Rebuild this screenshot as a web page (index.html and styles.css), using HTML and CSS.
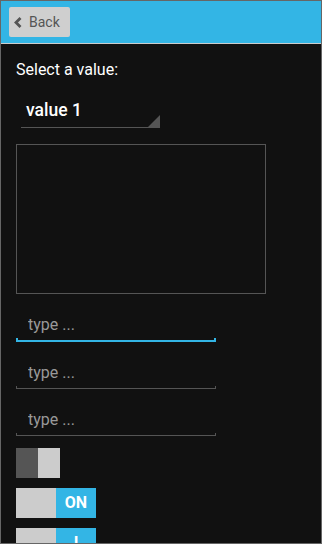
FILE: index.html
```html
<!DOCTYPE html>
<html lang="en">
<head>
  <meta charset="UTF-8">
  <meta name="viewport" content="width=device-width, initial-scale=1">
  <title>Form controls</title>
  <link rel="stylesheet" href="styles.css">
</head>
<body>
  <header class="toolbar">
    <button class="back-btn" type="button">
      <svg class="back-icon" width="8" height="11" viewBox="0 0 8 11"><polyline points="6.5,1 2,5.5 6.5,10" fill="none" stroke="#555" stroke-width="2.8"/></svg>
      Back
    </button>
  </header>
  <div class="content">
    <div class="label">Select a value:</div>
    <div class="picker">
      <span>value 1</span>
      <span class="picker-corner"></span>
    </div>
    <textarea class="area"></textarea>
    <div class="field">
      <input class="field-input" type="text" placeholder="type ...">
      <div class="field-line focused"></div>
    </div>
    <div class="field">
      <input class="field-input" type="text" placeholder="type ...">
      <div class="field-line"></div>
    </div>
    <div class="field">
      <input class="field-input" type="text" placeholder="type ...">
      <div class="field-line"></div>
    </div>
    <div class="toggle small">
      <span class="knob-off"></span>
      <span class="knob-light"></span>
    </div>
    <div class="toggle">
      <span class="knob-light"></span>
      <span class="knob-on">ON</span>
    </div>
    <div class="toggle">
      <span class="knob-light"></span>
      <span class="knob-on">I</span>
    </div>
  </div>
</body>
</html>
```
FILE: styles.css
```css
html, body { margin: 0; padding: 0; }
body { font-family: Roboto, "Noto Sans", sans-serif; background: #111; color: #fff; width: 322px; height: 544px; box-sizing: border-box; border: 1px solid #666; overflow: hidden; }
.toolbar { background: #33b5e5; border-bottom: 1px solid #ccc; padding: 6px 0 0 8px; height: 36px; }
.back-btn { display: flex; align-items: center; gap: 7px; width: 61px; height: 30px; padding: 0 0 0 5px; background: #cfcfcf; border: none; border-radius: 2px; color: #555; font-family: Roboto, sans-serif; font-size: 14px; }
.back-icon { display: block; }
.content { padding: 16px 15px; }
.label { font-size: 16px; line-height: 19px; }
.picker { position: relative; width: 134px; margin: 14px 0 0 5px; padding: 8px 0 7px 5px; line-height: 19px; font-size: 17.5px; font-weight: 500; border-bottom: 1px solid #555; }
.picker-corner { position: absolute; right: 0; bottom: 0; width: 0; height: 0; border-style: solid; border-width: 0 0 12px 12px; border-color: transparent transparent #555 transparent; }
.area { display: block; width: 250px; height: 150px; box-sizing: border-box; margin-top: 16px; background: transparent; border: 1px solid #555; resize: none; }
.field { width: 200px; padding-top: 17px; }
.field-input { display: block; width: 100%; box-sizing: border-box; height: 27px; padding: 0 12px; background: transparent; border: none; outline: none; color: #fff; font-family: Roboto, sans-serif; font-size: 16px; }
.field-input::placeholder { color: #999; }
.field-line { height: 2px; border: 1px solid #555; border-top: none; }
.field-line.focused { border: 2px solid #33b5e5; border-top: none; }
.toggle { display: flex; width: 80px; height: 30px; margin-top: 10px; }
.toggle.small { width: 44px; margin-top: 12px; }
.knob-off { flex: 1; background: #555; }
.knob-light { flex: 1; background: #ccc; }
.knob-on { flex: 1; background: #33b5e5; color: #fff; font-weight: 700; font-size: 16px; text-align: center; line-height: 30px; }
```
